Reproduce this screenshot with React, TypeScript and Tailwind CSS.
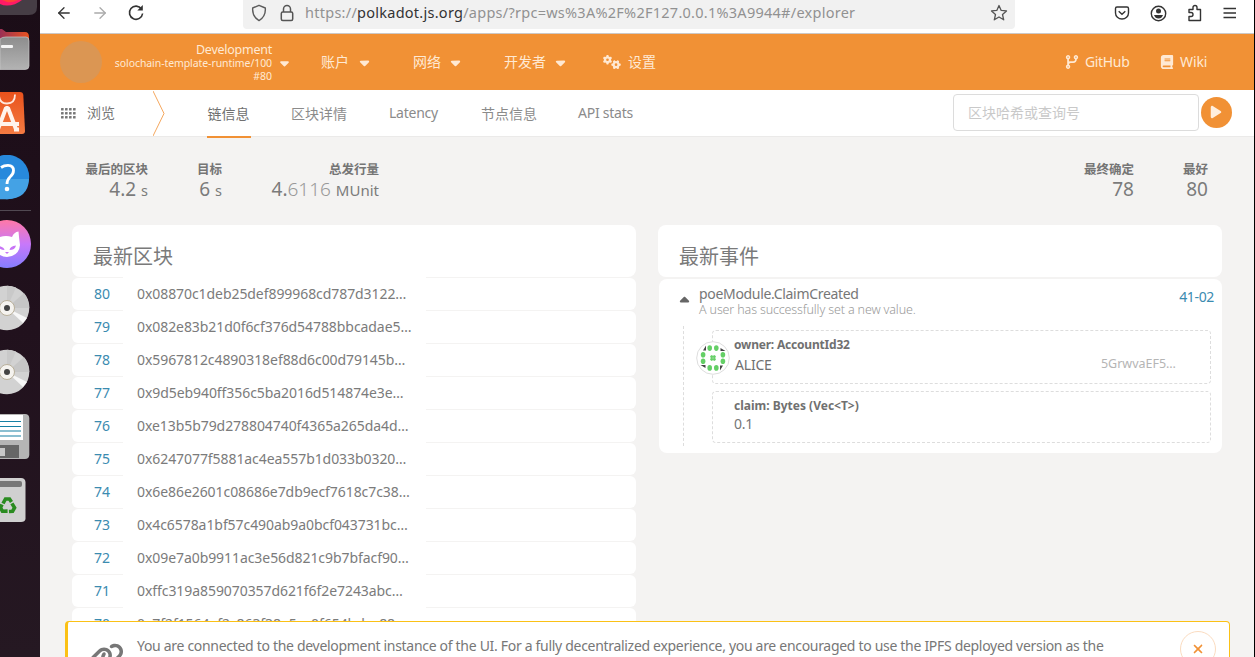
import type { ReactNode } from "react";
import { FaCaretDown, FaCaretUp, FaCodeBranch, FaBook, FaGears, FaPlay, FaLink, FaXmark } from "react-icons/fa6";
import { LuArrowLeft, LuArrowRight } from "react-icons/lu";

const blocks: [number, string][] = [
  [80, "0x08870c1deb25def899968cd787d3122…"],
  [79, "0x082e83b21d0f6cf376d54788bbcadae5…"],
  [78, "0x5967812c4890318ef88d6c00d79145b…"],
  [77, "0x9d5eb940ff356c5ba2016d514874e3e…"],
  [76, "0xe13b5b79d278804740f4365a265da4d…"],
  [75, "0x6247077f5881ac4ea557b1d033b0320…"],
  [74, "0x6e86e2601c08686e7db9ecf7618c7c38…"],
  [73, "0x4c6578a1bf57c490ab9a0bcf043731bc…"],
  [72, "0x09e7a0b9911ac3e56d821c9b7bfacf90…"],
  [71, "0xffc319a859070357d621f6f2e7243abc…"],
  [70, "0x7f2f1564af2c863f38a5ac0f654bdce88…"],
];

function Disc() {
  return (
    <svg width="40" height="46" viewBox="0 0 40 46" className="block">
      <circle cx="7" cy="23" r="22.3" fill="#d2d2d2" />
      <path d="M7 23 24 8A22.3 22.3 0 0 1 29.300 23Z" fill="#c6c6c6" />
      <path d="M7 23 7 .7A22.3 22.3 0 0 1 16 2.500Z" fill="#c9c9c9" />
      <path d="M7 23 27 33 23 38Z" fill="#f7f7f7" />
      <circle cx="7" cy="23" r="7.500" fill="#f5f3ef" stroke="#b9b09b" />
      <circle cx="7" cy="23" r="3" fill="#444" />
    </svg>
  );
}

function Dock() {
  return (
    <aside className="flex h-full w-10 shrink-0 flex-col overflow-hidden bg-gradient-to-b from-[#1b0d17] via-[#21111d] to-[#251822]">
      <svg width="40" height="29" viewBox="0 0 40 29" className="shrink-0">
        <path d="M0 0H37V7Q37 15 29 15H0Z" fill="#463d45" />
        <path d="M0 0H22Q15 5.500 7 5.500Q3 5.500 0 4Z" fill="#ff1a66" />
        <path d="M2 0H18Q12 3 7 2Z" fill="#ff4338" />
      </svg>
      <svg width="40" height="42" viewBox="0 0 40 42" className="shrink-0">
        <defs>
          <linearGradient id="folder" x2="0" y2="1"><stop stopColor="#8d8d8d" /><stop offset="1" stopColor="#b3b3b3" /></linearGradient>
          <linearGradient id="tab"><stop stopColor="#9a2f55" /><stop offset="1" stopColor="#e95420" /></linearGradient>
        </defs>
        <path d="M0 0H2L6 3H25Q29 3 29 8V22H0Z" fill="url(#tab)" />
        <path d="M0 10Q2 8 6 8H26Q29 8 29 12V37Q29 40.500 25 40.500H0Z" fill="url(#folder)" stroke="#c9c9c9" strokeWidth=".7" />
        <rect x="1" y="16" width="12" height="3" rx="1" fill="#f5f5f5" />
      </svg>
      <svg width="40" height="84" viewBox="0 0 40 84" className="shrink-0">
        <defs><linearGradient id="bag" x2="0" y2="1"><stop stopColor="#e9521c" /><stop offset="1" stopColor="#f47b42" /></linearGradient></defs>
        <path d="M0 21H20Q23 21 23.300 24L25 60Q25 63 22 63H0Z" fill="url(#bag)" />
        <path d="M-1 23.500Q-1 32.500 7 32.500T15 23.500" fill="none" stroke="#ffe7dc" strokeWidth="1.800" />
        <path d="M-2.500 59.500 6 37H8L16.500 59.500M-1 53H19M14 58.500H19" fill="none" stroke="#fff3ec" strokeWidth="4" strokeLinejoin="bevel" />
      </svg>
      <svg width="40" height="55" viewBox="0 0 40 55" className="shrink-0">
        <circle cx="7" cy="22" r="22.200" fill="#2789dc" />
        <path d="M0 24H29Q28 44 7 44.200H0Z" fill="#44a2e5" />
        <path d="M1 12.500Q4 10.300 8 10.300Q13.500 10.300 13.500 15.500Q13.500 19 10 22Q7 25 7 29" fill="none" stroke="#fff" strokeWidth="2.800" />
        <circle cx="7" cy="34" r="2.300" fill="#fff" />
      </svg>
      <div className="h-px w-[31px] shrink-0 bg-[#514952]" />
      <svg width="40" height="74" viewBox="0 0 40 74" className="shrink-0">
        <defs><linearGradient id="cat" x2="0" y2="1"><stop stopColor="#ff78a7" /><stop offset=".5" stopColor="#c878fa" /><stop offset="1" stopColor="#857dff" /></linearGradient></defs>
        <circle cx="7" cy="33" r="24" fill="url(#cat)" />
        <path d="M0 26Q6 24 12 26Q14 21 18.500 20.500Q19 27 20 34Q19 45 7 46Q3 46 0 44Z" fill="#fff" />
        <path d="M9.500 39Q10 35 16 34.500Q15 39 9.500 39ZM-1 35Q4 36 4.500 39Q1 39 -1 37ZM5 41H9L7 43Z" fill="#c774f6" />
      </svg>
      <div className="h-16 shrink-0"><Disc /></div>
      <div className="h-16 shrink-0"><Disc /></div>
      <svg width="40" height="64" viewBox="0 0 40 64" className="shrink-0">
        <path d="M0 1H25Q29 1 29.300 5V42Q29 46 25 46H0Z" fill="#b5b5b5" />
        <path d="M0 2H23V27H0Z" fill="#fff" />
        <path d="M0 8.500H21M0 13.500H21M0 18H21M0 23H21" stroke="#1680a4" strokeWidth="1.200" />
        <path d="M0 32H19V45H0Z" fill="#666" /><path d="M0 35H5V43H0Z" fill="#c8c8c8" />
      </svg>
      <svg width="40" height="48" viewBox="0 0 40 48" className="shrink-0">
        <path d="M0 1H21Q25 1 25.500 5V42Q25 45 21 45H0Z" fill="#d0d0d0" />
        <rect x="-4" y="4" width="26" height="6" rx="2" fill="#777" />
        <g transform="translate(7.500 29)" fill="none" stroke="#2a8b20" strokeWidth="3.600">
          <path d="M-4.500-2.500-2-7H2L4-4" /><path d="M-4.500-2.500-2-7H2L4-4" transform="rotate(120)" /><path d="M-4.500-2.500-2-7H2L4-4" transform="rotate(240)" />
        </g>
      </svg>
    </aside>
  );
}

function Browser() {
  return (
    <div className="flex h-[34px] shrink-0 border-b border-[#ccc8c6] bg-white text-[#333]">
      <div className="flex h-[26px] w-[203px] items-center pl-[15px]">
        <LuArrowLeft size={18} strokeWidth={1.7} />
        <LuArrowRight size={18} strokeWidth={1.7} className="ml-[18px] text-[#aaa]" />
        <svg width="18" height="18" viewBox="0 0 18 18" className="ml-[18px]" fill="none" stroke="currentColor" strokeWidth="1.600">
          <path d="M14.500 5A6.600 6.600 0 1 0 15.600 9.500" /><path d="M15.800 1V6.500H10.300Z" fill="currentColor" stroke="none" />
        </svg>
      </div>
      <div className="flex h-[29px] w-[772px] items-center rounded-b bg-[#f1f1f1] pb-[3px] pl-2">
        <svg width="16" height="18" viewBox="0 0 16 18" fill="none" stroke="#5b5b5b" strokeWidth="1.400">
          <path d="M8 1.300 14.300 4Q15 12.500 8 16.600Q1 12.500 1.700 4Z" strokeLinejoin="round" />
        </svg>
        <svg width="14" height="18" viewBox="0 0 14 18" className="ml-[13px]" fill="none" stroke="#555" strokeWidth="1.500">
          <rect x="1.300" y="8" width="11.400" height="8.500" rx="1.500" /><path d="M3.500 8V5A3.500 3.500 0 0 1 10.500 5V8" />
        </svg>
        <span className="ml-[11px] whitespace-nowrap text-[14.500px] tracking-[0.26px] text-[#919191]">https://<span className="text-[#333]">polkadot.js.org</span>/apps/?rpc=ws%3A%2F%2F127.0.0.1%3A9944#/explorer</span>
        <svg width="18" height="18" viewBox="0 0 18 18" className="mr-[7px] ml-auto" fill="none" stroke="#555" strokeWidth="1.300">
          <path d="m9 1.500 2.200 4.900 5.300.5-4 3.600 1.200 5.300L9 13l-4.700 2.800 1.200-5.300-4-3.600 5.300-.5Z" strokeLinejoin="round" />
        </svg>
      </div>
      <div className="flex h-[26px] flex-1 items-center justify-end gap-[20px] pr-[18px]">
        <svg width="16" height="16" viewBox="0 0 16 16" fill="none" stroke="currentColor" strokeWidth="1.400"><path d="M3 2H13Q14.500 2 14.500 3.500V8A6.500 6 0 0 1 1.500 8V3.500Q1.500 2 3 2Z" /><path d="m4.700 6.300 3.300 3 3.300-3" /></svg>
        <svg width="17" height="17" viewBox="0 0 17 17" fill="none" stroke="currentColor" strokeWidth="1.400"><circle cx="8.500" cy="8.500" r="7.200" /><circle cx="8.500" cy="6" r="2.500" fill="currentColor" stroke="none" /><path d="M4 10H13Q11.800 13.500 8.500 13.500T4 10Z" fill="currentColor" stroke="none" /></svg>
        <svg width="16" height="18" viewBox="0 0 16 18" fill="none" stroke="currentColor" strokeWidth="1.400"><path d="M2 5.500H6V3.500A2 2 0 0 1 10 3.500V5.500H13.500V16.500H2V12.500H4A2 2 0 0 0 4 8.500H2Z" strokeLinejoin="round" /></svg>
        <svg width="13" height="14" viewBox="0 0 13 14" stroke="currentColor" strokeWidth="1.300"><path d="M.5 2.500H13M.5 7H13M.5 11.500H13" /></svg>
      </div>
    </div>
  );
}

function Header() {
  return (
    <header className="flex h-14 shrink-0 items-center bg-[#f19135] text-[14px] text-[#ffe9d3]">
      <div className="ml-5 size-[42px] rounded-full bg-[#db9653]" />
      <div className="ml-[10px] flex w-[160px] flex-col items-end whitespace-nowrap pt-px text-[10.500px] leading-[13px]">
        <div className="text-[12.500px] leading-[14px] tracking-[-0.25px]">Development</div>
        <div className="tracking-[-0.08px]">solochain-template-runtime/100</div>
        <div>#80</div>
      </div>
      <FaCaretDown size={15} className="ml-[5px] pt-px" />
      <nav className="ml-[29px] flex h-[54px] items-center self-start">
        <span className="w-[29px]">账户</span><FaCaretDown size={15} className="mt-[3px] ml-[7px]" />
        <span className="ml-[41px] w-7">网络</span><FaCaretDown size={15} className="mt-[3px] ml-[7px]" />
        <span className="ml-[41px] w-[42px]">开发者</span><FaCaretDown size={15} className="mt-[3px] ml-[7px]" />
        <FaGears size={18} className="mt-[2px] ml-[35px]" /><span className="ml-[7px]">设置</span>
      </nav>
      <div className="mr-[46px] ml-auto flex h-[54px] items-center self-start">
        <FaCodeBranch size={14} className="mt-[2px]" /><span className="ml-[6px] w-[44px] tracking-[-0.35px]">GitHub</span>
        <FaBook size={14} className="mt-[2px] ml-[31px]" /><span className="ml-[6px] w-[28px] tracking-[-0.1px]">Wiki</span>
      </div>
    </header>
  );
}

function Tabs() {
  return (
    <div className="flex h-[47px] shrink-0 border-b border-[#ebeae9] bg-white text-[14px] text-[#777]">
      <div className="flex h-[46px] items-center">
        <svg width="15" height="11" viewBox="0 0 15 11" className="ml-[21px]" fill="#777">
          {[0, 4, 8, 12].map((x) => [0, 4, 8].map((y) => <rect key={`${x}-${y}`} x={x} y={y} width="2.600" height="2.600" rx=".5" />))}
        </svg>
        <span className="ml-[11px] pb-[2px]">浏览</span>
        <svg width="12" height="46" viewBox="0 0 12 46" className="ml-[38px]" fill="none" stroke="#f19135" strokeWidth=".8"><path d="M0 1 11 23.500 0 46" /></svg>
      </div>
      <div className="ml-[42px] flex h-12 items-center whitespace-nowrap text-[#8b8b8b]">
        <span className="flex h-12 w-11 items-center border-b-2 border-[#f19135] pl-[0.5px] text-[#707070]">链信息</span>
        <span className="ml-[40px] w-[57px] pb-[2px]">区块详情</span>
        <span className="ml-[41px] w-[51px] pb-[4px] tracking-[-0.25px]">Latency</span>
        <span className="ml-[41px] w-[56px] pb-[2px]">节点信息</span>
        <span className="ml-[41px] pb-[4px] tracking-[-0.25px]">API stats</span>
      </div>
      <div className="mt-1 mr-[22px] ml-auto flex h-[37px] items-center">
        <div className="flex h-[37px] w-[246px] items-center rounded border border-[#dcdcdc] pl-[14px] text-[#c9c9c9]">区块哈希或查询号</div>
        <div className="ml-0.5 grid size-[31px] place-items-center rounded-full bg-[#f19135] pr-px pb-px text-[#ffeedd]"><FaPlay size={14} /></div>
      </div>
    </div>
  );
}

function Stat({ label, className, children }: { label: string; className: string; children: ReactNode }) {
  return (
    <div className={`flex flex-col items-end whitespace-nowrap ${className}`}>
      <div className="text-[12.500px] leading-[18px] font-bold text-[#757575]">{label}</div>
      <div className="text-[19px] leading-[21px] text-[#7b7b7b]">{children}</div>
    </div>
  );
}

function Blocks() {
  return (
    <section className="w-[564px]">
      <div className="h-[52px] rounded-lg bg-white pt-4 pl-[21px] text-[20px] leading-8 text-[#7a7a7a]">最新区块</div>
      {blocks.map(([n, hash]) => (
        <div key={n} className="flex h-[33px] text-[14px] leading-8">
          <div className="mt-px h-8 w-[51px] rounded-l-md bg-white pl-[22px] tracking-[-0.1px] text-[#3b8bb0]">{n}</div>
          <div className="-mt-px h-[34px] w-[303px] bg-white pt-[2px] pl-[14px] tracking-[-0.07px] whitespace-nowrap text-[#7b7b7b]">{hash}</div>
          <div className="mt-px h-8 flex-1 rounded-r-md bg-white" />
        </div>
      ))}
    </section>
  );
}

function Identicon() {
  const dots = [[9.900, -3.300], [9.900, 3.300], [-9.900, -3.300], [-9.900, 3.300], [-3.300, -9.900], [3.300, -9.900], [-3.300, 9.900], [3.300, 9.900]];
  return (
    <svg width="34" height="34" viewBox="-17 -17 34 34" className="absolute top-[10px] left-[-17px]">
      <circle r="16.300" fill="#fff" stroke="#ddd" />
      <path d="M-7-12.500V-7.500H-10ZM12.500-7H7.500V-10ZM7 12.500V7.500H10ZM-12.500 7H-7.500V10Z" fill="#444" />
      {dots.map(([x, y]) => <ellipse key={`${x},${y}`} cx={x} cy={y} rx="2.300" ry="2.800" fill="#64cf66" />)}
      <path d="M-2.500-2.500H2.500V2.500H-2.500Z" fill="#94dc94" />
      <path d="M-1.300-2.800V2.800M1.300-2.800V2.800M-2.800-1.300H2.800M-2.800 1.300H2.800" stroke="#64cf66" />
    </svg>
  );
}

function Events() {
  return (
    <section className="w-[564px]">
      <div className="h-[52px] rounded-lg bg-white pt-4 pl-[21px] text-[20px] leading-8 text-[#7a7a7a]">最新事件</div>
      <div className="mt-0.5 ml-px h-[174px] rounded-lg bg-white pt-[7px]">
        <div className="flex h-[40px] pr-2 pl-[18px]">
          <FaCaretUp size={15} className="mt-[7px] text-[#666]" />
          <div className="ml-[7px] whitespace-nowrap">
            <div className="text-[14px] leading-4 tracking-[-0.32px] text-[#777]">poeModule.ClaimCreated</div>
            <div className="text-[12.500px] leading-[15px] font-light tracking-[-0.14px] text-[#999]">A user has successfully set a new value.</div>
          </div>
          <span className="ml-auto text-[14px] leading-[22px] tracking-[-0.35px] text-[#3b8bb0]">41-02</span>
        </div>
        <div className="mr-[11px] ml-6 h-[120px] border-l border-dashed border-[#ddd] pt-1 pl-7">
          <div className="relative h-[54px] rounded border border-dashed border-[#ddd] pt-[5px] pl-[21px]">
            <Identicon />
            <div className="text-[12px] leading-[17px] font-bold tracking-[-0.2px] text-[#707070]">owner: AccountId32</div>
            <div className="flex justify-between pr-[34px] leading-6">
              <span className="pl-px text-[14px] tracking-[-0.2px] text-[#707070]">ALICE</span>
              <span className="text-[12.500px] leading-[22px] text-[#b5b5b5]">5GrwvaEF5…</span>
            </div>
          </div>
          <div className="mt-[7px] h-[52px] rounded border border-dashed border-[#ddd] pt-[5px] pl-[21px]">
            <div className="text-[12px] leading-[17px] font-bold text-[#707070]">claim: Bytes (Vec&lt;T&gt;)</div>
            <div className="text-[14px] leading-5 tracking-[-0.3px] text-[#777]">0.1</div>
          </div>
        </div>
      </div>
    </section>
  );
}

export default function App() {
  return (
    <div className="relative flex h-[657px] w-[1255px] overflow-hidden bg-[#f4f3f2] font-['Noto_Sans','Noto_Sans_CJK_SC',sans-serif]">
      <Dock />
      <main className="flex h-full min-w-0 flex-1 flex-col border-r border-black">
        <Browser />
        <Header />
        <Tabs />
        <div className="flex h-[88px] shrink-0 pt-[24px] pr-[46px] pl-[45px]">
          <Stat label="最后的区块" className="w-[63px]">4.2 <span className="text-[14.500px]">s</span></Stat>
          <Stat label="目标" className="w-[74px]">6 <span className="text-[14.500px]">s</span></Stat>
          <Stat label="总发行量" className="w-[157px]">4.<span className="font-light text-[#999]">6116</span> <span className="text-[15px]">MUnit</span></Stat>
          <div className="flex-1" />
          <Stat label="最终确定" className="w-[50px]">78</Stat>
          <Stat label="最好" className="w-[74px]">80</Stat>
        </div>
        <div className="flex gap-[22px] pl-8"><Blocks /><Events /></div>
      </main>
      <div className="absolute top-[621px] left-[65px] flex h-20 w-[1165px] rounded border border-l-[3px] border-[#fbc116] bg-white">
        <FaLink size={35} className="mt-[17px] ml-[21px] text-[#777]" />
        <p className="mt-[13px] ml-[13px] whitespace-nowrap text-[14px] leading-[22px] tracking-[-0.305px] text-[#777]">You are connected to the development instance of the UI. For a fully decentralized experience, you are encouraged to use the IPFS deployed version as the</p>
        <div className="absolute top-[9px] right-[13px] grid size-9 place-items-center rounded-full border border-[#fbdcc0] text-[#f19135]"><FaXmark size={14} /></div>
      </div>
    </div>
  );
}
